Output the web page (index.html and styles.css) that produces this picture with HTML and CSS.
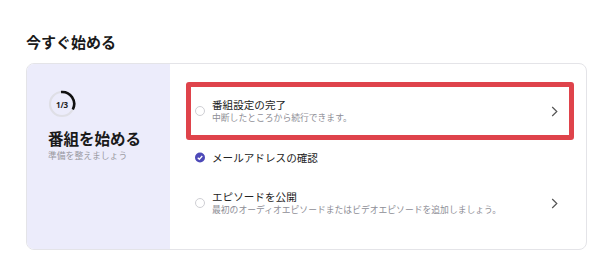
FILE: index.html
```html
<!DOCTYPE html>
<html lang="ja">
<head>
<meta charset="utf-8">
<link rel="stylesheet" href="styles.css">
</head>
<body>
<div class="page">
  <h2 class="heading">今すぐ始める</h2>
  <div class="card">
    <div class="side">
      <div class="progress">
        <svg width="28" height="28" viewBox="0 0 28 28">
          <circle cx="14" cy="14" r="12" fill="none" stroke="#dfdfe6" stroke-width="2.2"/>
          <path d="M13 2 A12 12 0 0 1 24.8 19.5" fill="none" stroke="#111" stroke-width="2.6"/>
        </svg>
        <span class="progress-label">1/3</span>
      </div>
      <div class="side-title">番組を始める</div>
      <div class="side-sub">準備を整えましょう</div>
    </div>
    <div class="list">
      <div class="item item-tall item-active">
        <span class="radio"></span>
        <div class="text">
          <div class="title">番組設定の完了</div>
          <div class="sub">中断したところから続行できます。</div>
        </div>
        <svg class="chev" width="7" height="11" viewBox="0 0 7 11"><path d="M1.2 1 L5.8 5.5 L1.2 10" fill="none" stroke="#555" stroke-width="1.2"/></svg>
      </div>
      <div class="item item-short">
        <span class="check">
          <svg width="11" height="11" viewBox="0 0 11 11"><circle cx="5.5" cy="5.5" r="5.5" fill="#4d49b8"/><path d="M3 5.7 L4.8 7.4 L8 3.9" fill="none" stroke="#fff" stroke-width="1.4"/></svg>
        </span>
        <div class="text">
          <div class="title">メールアドレスの確認</div>
        </div>
      </div>
      <div class="item item-tall">
        <span class="radio"></span>
        <div class="text">
          <div class="title">エピソードを公開</div>
          <div class="sub">最初のオーディオエピソードまたはビデオエピソードを追加しましょう。</div>
        </div>
        <svg class="chev" width="7" height="11" viewBox="0 0 7 11"><path d="M1.2 1 L5.8 5.5 L1.2 10" fill="none" stroke="#555" stroke-width="1.2"/></svg>
      </div>
    </div>
  </div>
</div>
</body>
</html>
```

FILE: styles.css
```css
* { box-sizing: border-box; }
html, body { margin: 0; padding: 0; background: #fff; }
body {
  font-family: "Noto Sans CJK JP", "Noto Sans", sans-serif;
  color: #1e1e1e;
  width: 593px;
  height: 280px;
  overflow: hidden;
}
.page { padding: 32px 6px 0 26px; }
.heading {
  margin: 0;
  font-size: 15px;
  line-height: 20px;
  font-weight: 700;
  color: #1a1a1a;
}
.card {
  margin-top: 11px;
  width: 561px;
  height: 187px;
  border: 1px solid #e4e4e8;
  border-radius: 8px;
  display: flex;
  overflow: hidden;
}
.side {
  width: 143px;
  flex: none;
  background: #ececfb;
  padding: 26px 0 0 21px;
}
.progress {
  position: relative;
  width: 28px;
  height: 28px;
}
.progress svg { display: block; }
.progress-label {
  position: absolute;
  inset: 0;
  display: flex;
  align-items: center;
  justify-content: center;
  font-family: "Noto Sans", sans-serif;
  font-size: 8px;
  font-weight: 700;
  color: #222;
  letter-spacing: -0.2px;
}
.side-title {
  margin-top: 10px;
  font-size: 15.5px;
  line-height: 20px;
  font-weight: 700;
  color: #1a1a1a;
}
.side-sub {
  margin-top: 1px;
  font-size: 8.8px;
  line-height: 14px;
  color: #9a9aa2;
}
.list {
  flex: 1;
  padding: 18px 12px 0 16px;
  display: flex;
  flex-direction: column;
}
.item {
  display: flex;
  align-items: center;
  border: 5px solid transparent;
  border-radius: 3px;
  padding: 0 11px 0 4px;
}
.item-tall { height: 58px; }
.item-short { height: 34px; }
.item-active { border-color: #df434b; }
.radio {
  flex: none;
  width: 10px;
  height: 10px;
  border: 1px solid #cfcfd4;
  border-radius: 50%;
}
.check {
  flex: none;
  width: 10px;
  height: 11px;
  display: flex;
  align-items: center;
  justify-content: center;
}
.check svg { display: block; }
.text {
  flex: 1;
  margin-left: 7px;
}
.title {
  font-size: 10.6px;
  line-height: 13px;
  color: #222;
}
.sub {
  font-size: 8.8px;
  line-height: 13px;
  color: #8e8e96;
}
.chev { flex: none; display: block; }
```
